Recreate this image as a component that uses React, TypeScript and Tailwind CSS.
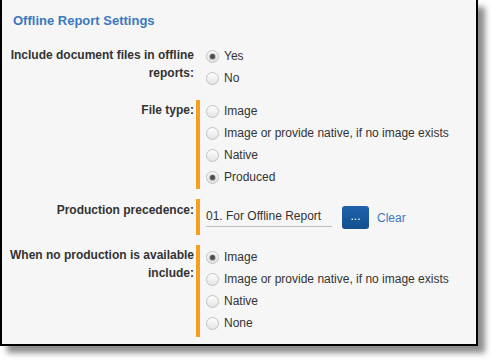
import React from "react";

type Option = { label: string; checked?: boolean };

function Radio({ label, checked }: Option) {
  return (
    <div className="flex h-[22px] items-center">
      <span className="mr-[5px] flex h-[13px] w-[13px] items-center justify-center rounded-full border border-[#c2c2c2] bg-gradient-to-b from-[#fefefe] to-[#e4e4e4]">
        {checked && <span className="h-[5px] w-[5px] rounded-full bg-[#4d4d4d] shadow-[0_0_1px_1px_rgba(90,90,90,0.35)]" />}
      </span>
      <span className="text-[12px] text-[#333]">{label}</span>
    </div>
  );
}

function Row({
  label,
  bar = true,
  className = "",
  labelClass = "pt-[1px]",
  children,
}: {
  label: React.ReactNode;
  bar?: boolean;
  className?: string;
  labelClass?: string;
  children: React.ReactNode;
}) {
  return (
    <div className={"flex " + className}>
      <div className={"w-[192px] whitespace-nowrap text-right text-[12px] font-bold leading-[18px] text-[#333] " + labelClass}>
        {label}
      </div>
      <div
        className={
          "ml-[2px] border-l-4 pl-[6px] " + (bar ? "border-[#f5a01e]" : "border-transparent")
        }
      >
        {children}
      </div>
    </div>
  );
}

export default function App() {
  return (
    <div className="h-[361px] w-[493px] bg-white font-['Liberation_Sans',Arial,sans-serif]">
      <div className="h-[346px] w-[478px] border-x-2 border-b-2 border-black bg-[#f6f6f6] shadow-[7px_7px_6px_rgba(0,0,0,0.45)]">
        <h2 className="pl-[11px] pt-[12px] text-[13px] font-bold leading-[18px] text-[#3b78c2]">
          Offline Report Settings
        </h2>

        <Row label={<>Include document files in offline<br />reports:</>} bar={false} className="mt-[15px]">
          <Radio label="Yes" checked />
          <Radio label="No" />
        </Row>

        <Row label="File type:" className="mt-[11px]">
          <div className="pb-[1px]">
            <Radio label="Image" />
            <Radio label="Image or provide native, if no image exists" />
            <Radio label="Native" />
            <Radio label="Produced" checked />
          </div>
        </Row>

        <Row label="Production precedence:" className="mt-[10px]" labelClass="pt-[2px]">
          <div className="flex items-start pb-[6px] pt-[7px]">
            <div className="flex h-[21px] w-[126px] items-center border-b border-[#bdbdbd] text-[12px] text-[#333]">
              01. For Offline Report
            </div>
            <button className="ml-[10px] flex h-[23px] w-[27px] items-center justify-center rounded-[3px] bg-gradient-to-b from-[#1d62ab] to-[#154f8e] pb-[3px] text-[12px] text-white">
              ...
            </button>
            <span className="ml-[8px] flex h-[23px] items-center text-[12px] text-[#3b78c2]">Clear</span>
          </div>
        </Row>

        <Row label={<>When no production is available<br />include:</>} className="mt-[10px]">
          <div className="pb-[3px] pt-[1px]">
            <Radio label="Image" checked />
            <Radio label="Image or provide native, if no image exists" />
            <Radio label="Native" />
            <Radio label="None" />
          </div>
        </Row>
      </div>
    </div>
  );
}
